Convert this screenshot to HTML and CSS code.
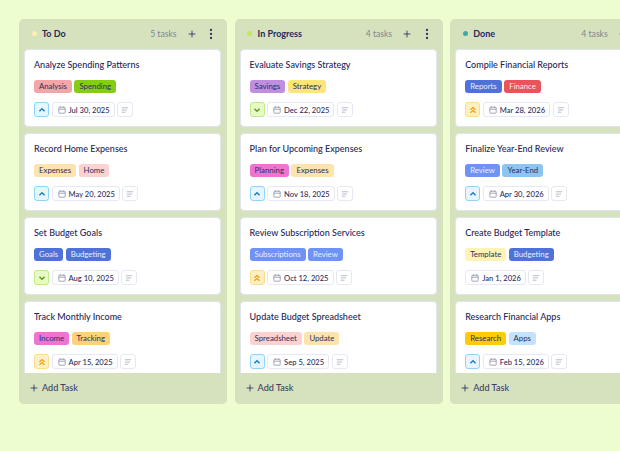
FILE: index.html
```html
<!DOCTYPE html>
<html lang="en">
<head>
<meta charset="utf-8">
<title>Budget Board</title>
<link rel="stylesheet" href="styles.css">
</head>
<body>
<svg class="defs" width="0" height="0" aria-hidden="true">
  <symbol id="cal" viewBox="0 0 10 10"><rect x="1" y="1.5" width="8" height="7.5" rx="1" fill="none" stroke="currentColor" stroke-width="1"/><path d="M1 4h8M3 .6v1.6M7 .6v1.6" fill="none" stroke="currentColor" stroke-width="1"/></symbol>
  <symbol id="lines" viewBox="0 0 10 10"><path d="M1 2.2h8M1 5h6.5M1 7.8h4.5" fill="none" stroke="currentColor" stroke-width="1"/></symbol>
  <symbol id="up" viewBox="0 0 10 10"><path d="M2.4 6.2 5 3.8l2.6 2.4" fill="none" stroke="currentColor" stroke-width="1.5"/></symbol>
  <symbol id="down" viewBox="0 0 10 10"><path d="M2.4 3.8 5 6.2l2.6-2.4" fill="none" stroke="currentColor" stroke-width="1.5"/></symbol>
  <symbol id="dbl" viewBox="0 0 10 10"><path d="M2.4 4.8 5 2.5l2.6 2.3M2.4 7.8 5 5.5l2.6 2.3" fill="none" stroke="currentColor" stroke-width="1.3"/></symbol>
  <symbol id="plus" viewBox="0 0 10 10"><path d="M5 .8v8.4M.8 5h8.4" fill="none" stroke="currentColor" stroke-width="1.1"/></symbol>
  <symbol id="dots" viewBox="0 0 4 12"><circle cx="2" cy="2" r="1.15" fill="currentColor"/><circle cx="2" cy="6" r="1.15" fill="currentColor"/><circle cx="2" cy="10" r="1.15" fill="currentColor"/></symbol>
</svg>
<main class="board">

<section class="column">
  <header class="col-head">
    <span class="dot dot-todo"></span><h2 class="col-title">To Do</h2>
    <span class="count">5 tasks</span>
    <svg class="ico-plus"><use href="#plus"/></svg>
    <svg class="ico-dots"><use href="#dots"/></svg>
  </header>
  <div class="cards">
    <article class="card">
      <h3 class="card-title">Analyze Spending Patterns</h3>
      <div class="tags"><span class="tag t-rose">Analysis</span><span class="tag t-lime">Spending</span></div>
      <div class="meta"><span class="prio p-blue"><svg><use href="#up"/></svg></span><span class="date"><svg><use href="#cal"/></svg>Jul 30, 2025</span><span class="note"><svg><use href="#lines"/></svg></span></div>
    </article>
    <article class="card">
      <h3 class="card-title">Record Home Expenses</h3>
      <div class="tags"><span class="tag t-cream">Expenses</span><span class="tag t-pale">Home</span></div>
      <div class="meta"><span class="prio p-blue"><svg><use href="#up"/></svg></span><span class="date"><svg><use href="#cal"/></svg>May 20, 2025</span><span class="note"><svg><use href="#lines"/></svg></span></div>
    </article>
    <article class="card">
      <h3 class="card-title">Set Budget Goals</h3>
      <div class="tags"><span class="tag t-indigo">Goals</span><span class="tag t-indigo">Budgeting</span></div>
      <div class="meta"><span class="prio p-green"><svg><use href="#down"/></svg></span><span class="date"><svg><use href="#cal"/></svg>Aug 10, 2025</span><span class="note"><svg><use href="#lines"/></svg></span></div>
    </article>
    <article class="card">
      <h3 class="card-title">Track Monthly Income</h3>
      <div class="tags"><span class="tag t-pink">Income</span><span class="tag t-orange">Tracking</span></div>
      <div class="meta"><span class="prio p-amber"><svg><use href="#dbl"/></svg></span><span class="date"><svg><use href="#cal"/></svg>Apr 15, 2025</span><span class="note"><svg><use href="#lines"/></svg></span></div>
    </article>
  </div>
  <footer class="col-foot"><svg class="ico-plus"><use href="#plus"/></svg>Add Task</footer>
</section>

<section class="column">
  <header class="col-head">
    <span class="dot dot-prog"></span><h2 class="col-title">In Progress</h2>
    <span class="count">4 tasks</span>
    <svg class="ico-plus"><use href="#plus"/></svg>
    <svg class="ico-dots"><use href="#dots"/></svg>
  </header>
  <div class="cards">
    <article class="card">
      <h3 class="card-title">Evaluate Savings Strategy</h3>
      <div class="tags"><span class="tag t-purple">Savings</span><span class="tag t-yellow">Strategy</span></div>
      <div class="meta"><span class="prio p-green"><svg><use href="#down"/></svg></span><span class="date"><svg><use href="#cal"/></svg>Dec 22, 2025</span><span class="note"><svg><use href="#lines"/></svg></span></div>
    </article>
    <article class="card">
      <h3 class="card-title">Plan for Upcoming Expenses</h3>
      <div class="tags"><span class="tag t-pink">Planning</span><span class="tag t-cream">Expenses</span></div>
      <div class="meta"><span class="prio p-blue"><svg><use href="#up"/></svg></span><span class="date"><svg><use href="#cal"/></svg>Nov 18, 2025</span><span class="note"><svg><use href="#lines"/></svg></span></div>
    </article>
    <article class="card">
      <h3 class="card-title">Review Subscription Services</h3>
      <div class="tags"><span class="tag t-blue">Subscriptions</span><span class="tag t-blue">Review</span></div>
      <div class="meta"><span class="prio p-amber"><svg><use href="#dbl"/></svg></span><span class="date"><svg><use href="#cal"/></svg>Oct 12, 2025</span><span class="note"><svg><use href="#lines"/></svg></span></div>
    </article>
    <article class="card">
      <h3 class="card-title">Update Budget Spreadsheet</h3>
      <div class="tags"><span class="tag t-pale">Spreadsheet</span><span class="tag t-cream">Update</span></div>
      <div class="meta"><span class="prio p-blue"><svg><use href="#up"/></svg></span><span class="date"><svg><use href="#cal"/></svg>Sep 5, 2025</span><span class="note"><svg><use href="#lines"/></svg></span></div>
    </article>
  </div>
  <footer class="col-foot"><svg class="ico-plus"><use href="#plus"/></svg>Add Task</footer>
</section>

<section class="column">
  <header class="col-head">
    <span class="dot dot-done"></span><h2 class="col-title">Done</h2>
    <span class="count">4 tasks</span>
    <svg class="ico-plus"><use href="#plus"/></svg>
    <svg class="ico-dots"><use href="#dots"/></svg>
  </header>
  <div class="cards">
    <article class="card">
      <h3 class="card-title">Compile Financial Reports</h3>
      <div class="tags"><span class="tag t-indigo">Reports</span><span class="tag t-red">Finance</span></div>
      <div class="meta"><span class="prio p-amber"><svg><use href="#dbl"/></svg></span><span class="date"><svg><use href="#cal"/></svg>Mar 28, 2026</span><span class="note"><svg><use href="#lines"/></svg></span></div>
    </article>
    <article class="card">
      <h3 class="card-title">Finalize Year-End Review</h3>
      <div class="tags"><span class="tag t-blue">Review</span><span class="tag t-sky">Year-End</span></div>
      <div class="meta"><span class="prio p-blue"><svg><use href="#up"/></svg></span><span class="date"><svg><use href="#cal"/></svg>Apr 30, 2026</span><span class="note"><svg><use href="#lines"/></svg></span></div>
    </article>
    <article class="card">
      <h3 class="card-title">Create Budget Template</h3>
      <div class="tags"><span class="tag t-lemon">Template</span><span class="tag t-indigo">Budgeting</span></div>
      <div class="meta"><span class="date"><svg><use href="#cal"/></svg>Jan 1, 2026</span><span class="note"><svg><use href="#lines"/></svg></span></div>
    </article>
    <article class="card">
      <h3 class="card-title">Research Financial Apps</h3>
      <div class="tags"><span class="tag t-gold">Research</span><span class="tag t-ice">Apps</span></div>
      <div class="meta"><span class="prio p-blue"><svg><use href="#up"/></svg></span><span class="date"><svg><use href="#cal"/></svg>Feb 15, 2026</span><span class="note"><svg><use href="#lines"/></svg></span></div>
    </article>
  </div>
  <footer class="col-foot"><svg class="ico-plus"><use href="#plus"/></svg>Add Task</footer>
</section>

</main>
</body>
</html>
```
FILE: styles.css
```css
* { box-sizing: border-box; }
html, body { margin: 0; height: 100%; overflow: hidden; }
body { background: #edfdd0; font-family: "Lato", "Liberation Sans", sans-serif; color: #2b2f5e; }
.defs { position: absolute; }
.board { display: flex; gap: 7.6px; padding: 19px 0 0 19px; width: 720px; }
.column { flex: 0 0 208px; height: 385px; background: #d6e2be; border-radius: 5px; display: flex; flex-direction: column; }
.col-head { flex: 0 0 30px; display: flex; align-items: center; padding: 0 14px 1px 12.5px; }
.dot { width: 5px; height: 5px; border-radius: 50%; margin-right: 5.5px; }
.dot-todo { background: #fdeeb5; }
.dot-prog { background: #bfe65c; }
.dot-done { background: #3fa9a5; }
.col-title { margin: 0; font-size: 9px; font-weight: 700; color: #26295a; }
.count { margin-left: auto; margin-right: 11px; font-size: 8.6px; color: #7d8691; }
.ico-plus { width: 8px; height: 8px; color: #2f3560; }
.ico-dots { width: 4px; height: 12px; margin-left: 13.5px; color: #2f3560; }
.cards { flex: 1; min-height: 0; overflow: hidden; padding: 0 6px 0 5px; display: flex; flex-direction: column; gap: 6px; }
.card { flex: 0 0 78px; background: #fff; border: 1px solid #dfe5f0; border-radius: 4px; padding: 8px 10px 0 9px; }
.card-title { margin: 0 0 9px; font-size: 9px; line-height: 13px; font-weight: 500; color: #23275a; }
.tags { display: flex; gap: 2.5px; height: 13px; }
.tag { height: 12.5px; padding: 0 5px; border-radius: 3px; font-size: 7.8px; line-height: 12.5px; color: #2b2f5e; }
.t-rose { background: #f3a5a8; }
.t-lime { background: #84cc16; }
.t-cream { background: #fde3ae; }
.t-pale { background: #fbd2d0; }
.t-indigo { background: #4f72d9; color: #e8eeff; }
.t-pink { background: #ee74d2; }
.t-orange { background: #fed27a; }
.t-purple { background: #c08ee0; }
.t-yellow { background: #fde47d; }
.t-blue { background: #6f93f5; color: #e8eeff; }
.t-red { background: #e8545a; color: #ffe6e6; }
.t-sky { background: #8cc4f2; }
.t-lemon { background: #fdf3b5; }
.t-gold { background: #fdcb0a; }
.t-ice { background: #c4e2fb; }
.meta { display: flex; gap: 2.5px; margin-top: 9px; height: 15px; }
.prio { flex: 0 0 15px; display: flex; align-items: center; justify-content: center; border: 1px solid; border-radius: 3px; }
.prio svg { width: 10px; height: 10px; }
.p-blue { background: #e7f6fe; border-color: #8fd3fb; color: #1c7fc4; }
.p-green { background: #e7fbc6; border-color: #bfe98a; color: #5e9c14; }
.p-amber { background: #fff0c4; border-color: #fedd8a; color: #f0a010; }
.date { display: flex; align-items: center; gap: 3px; padding: 0 4px 0 5px; background: #fff; border: 1px solid #e6e9f3; border-radius: 3px; font-size: 7.6px; font-weight: 500; color: #2b2f5e; }
.date svg { width: 8px; height: 8px; color: #8a90a8; }
.note { flex: 0 0 16px; display: flex; align-items: center; justify-content: center; border: 1px solid #e6e9f3; border-radius: 3px; color: #a8adc0; }
.note svg { width: 8px; height: 8px; }
.col-foot { flex: 0 0 31px; display: flex; align-items: center; gap: 4px; padding: 0 0 2px 11px; font-size: 9.1px; font-weight: 500; color: #3b4066; background: #d6e2be; border-radius: 0 0 5px 5px; }
```
